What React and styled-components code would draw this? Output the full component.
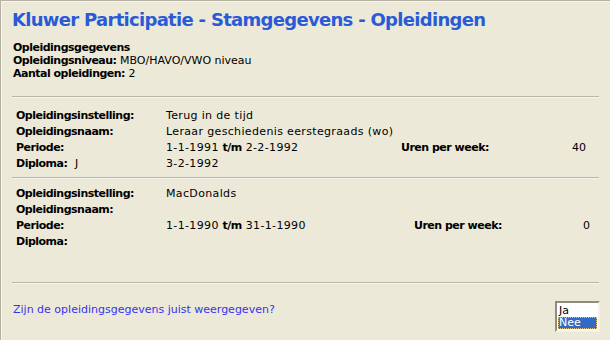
import React from "react";
import styled, { createGlobalStyle } from "styled-components";

const Global = createGlobalStyle`
  html, body { margin: 0; padding: 0; background: #ECE9D8; }
  body { font-family: "DejaVu Sans", Verdana, sans-serif; font-size: 11px; color: #000; }
  b { letter-spacing: -0.5px; }
`;

const Page = styled.div`
  width: 610px;
  height: 340px;
  box-sizing: border-box;
  border-top: 1px solid #B5B2A3;
  border-left: 1px solid #B5B2A3;
  box-shadow: inset 1px 1px 0 #F7F6F0;
  padding: 8px 11px 0 11px;
  overflow: hidden;
`;

const Title = styled.h1`
  margin: 0;
  font-size: 18px;
  line-height: 22px;
  font-weight: bold;
  letter-spacing: -0.7px;
  color: #2A5BD7;
`;

const Summary = styled.div`
  margin-top: 10px;
  padding-left: 1px;
  line-height: 13px;
`;

const Rule = styled.hr`
  margin: ${(p) => p.$mt}px 0 0 0;
  width: 587px;
  height: 0;
  border: 0;
  border-top: 1px solid #B9B7A8;
  border-bottom: 1px solid #F5F4EE;
`;

const Block = styled.div`
  display: grid;
  grid-template-columns: 150px ${(p) => p.$valW}px ${(p) => p.$urenW}px 1fr;
  margin-top: ${(p) => p.$mt}px;
  padding-left: 4px;
  width: ${(p) => p.$w}px;
`;

const Label = styled.div`
  font-weight: bold;
  letter-spacing: -0.5px;
  line-height: 16px;
  height: 16px;
  white-space: nowrap;
`;

const Value = styled.div`
  line-height: 16px;
  height: 16px;
  white-space: nowrap;
  letter-spacing: 0.35px;
`;

const Num = styled(Value)`
  text-align: right;
  letter-spacing: 0;
`;

const Plain = styled.span`
  font-weight: normal;
  letter-spacing: 0;
  margin-left: 4px;
`;

const Footer = styled.div`
  margin-top: 18px;
  display: flex;
  justify-content: space-between;
  align-items: flex-start;
  width: 588px;
`;

const Question = styled.div`
  color: #3434F0;
  line-height: 13px;
  padding-left: 1px;
  padding-top: 1px;
`;

const ListBox = styled.div`
  width: 45px;
  box-sizing: border-box;
  background: #fff;
  border: 2px solid;
  border-color: #8E8C80 #F2F1EA #F2F1EA #8E8C80;
  padding: 2px 1px 1px 1px;
  margin-top: -1px;
`;

const Option = styled.div`
  font-size: 11px;
  line-height: 12px;
  padding-left: 1px;
  background: ${(p) => (p.$sel ? "#316AC5" : "transparent")};
  color: ${(p) => (p.$sel ? "#fff" : "#000")};
  outline: ${(p) => (p.$sel ? "1px dotted #E0C080" : "none")};
  outline-offset: -1px;
`;

const Spacer = styled.div``;

function Opleiding({ mt, valW, urenW, w, instelling, naam, van, tot, uren, diploma, diplomaCode }) {
  return (
    <Block $mt={mt} $valW={valW} $urenW={urenW} $w={w}>
      <Label>Opleidingsinstelling:</Label>
      <Value>{instelling}</Value>
      <Spacer />
      <Spacer />
      <Label>Opleidingsnaam:</Label>
      <Value>{naam}</Value>
      <Spacer />
      <Spacer />
      <Label>Periode:</Label>
      <Value>
        {van} <b>t/m</b> {tot}
      </Value>
      <Label>Uren per week:</Label>
      <Num>{uren}</Num>
      <Label>
        Diploma:{diplomaCode ? <Plain> {diplomaCode}</Plain> : null}
      </Label>
      <Value>{diploma}</Value>
      <Spacer />
      <Spacer />
    </Block>
  );
}

export default function App() {
  return (
    <>
      <Global />
      <Page>
        <Title>Kluwer Participatie - Stamgegevens - Opleidingen</Title>
        <Summary>
          <b>Opleidingsgegevens</b>
          <br />
          <b>Opleidingsniveau:</b> MBO/HAVO/VWO niveau
          <br />
          <b>Aantal opleidingen:</b> 2
        </Summary>
        <Rule $mt={16} />
        <Opleiding
          mt={10}
          valW={235}
          urenW={130}
          w={570}
          instelling="Terug in de tijd"
          naam="Leraar geschiedenis eerstegraads (wo)"
          van="1-1-1991"
          tot="2-2-1992"
          uren="40"
          diploma="3-2-1992"
          diplomaCode="J"
        />
        <Rule $mt={5} />
        <Opleiding
          mt={7}
          valW={248}
          urenW={130}
          w={574}
          instelling="MacDonalds"
          naam=""
          van="1-1-1990"
          tot="31-1-1990"
          uren="0"
          diploma=""
        />
        <Rule $mt={32} />
        <Footer>
          <Question>Zijn de opleidingsgegevens juist weergegeven?</Question>
          <ListBox>
            <Option>Ja</Option>
            <Option $sel>Nee</Option>
          </ListBox>
        </Footer>
      </Page>
    </>
  );
}
